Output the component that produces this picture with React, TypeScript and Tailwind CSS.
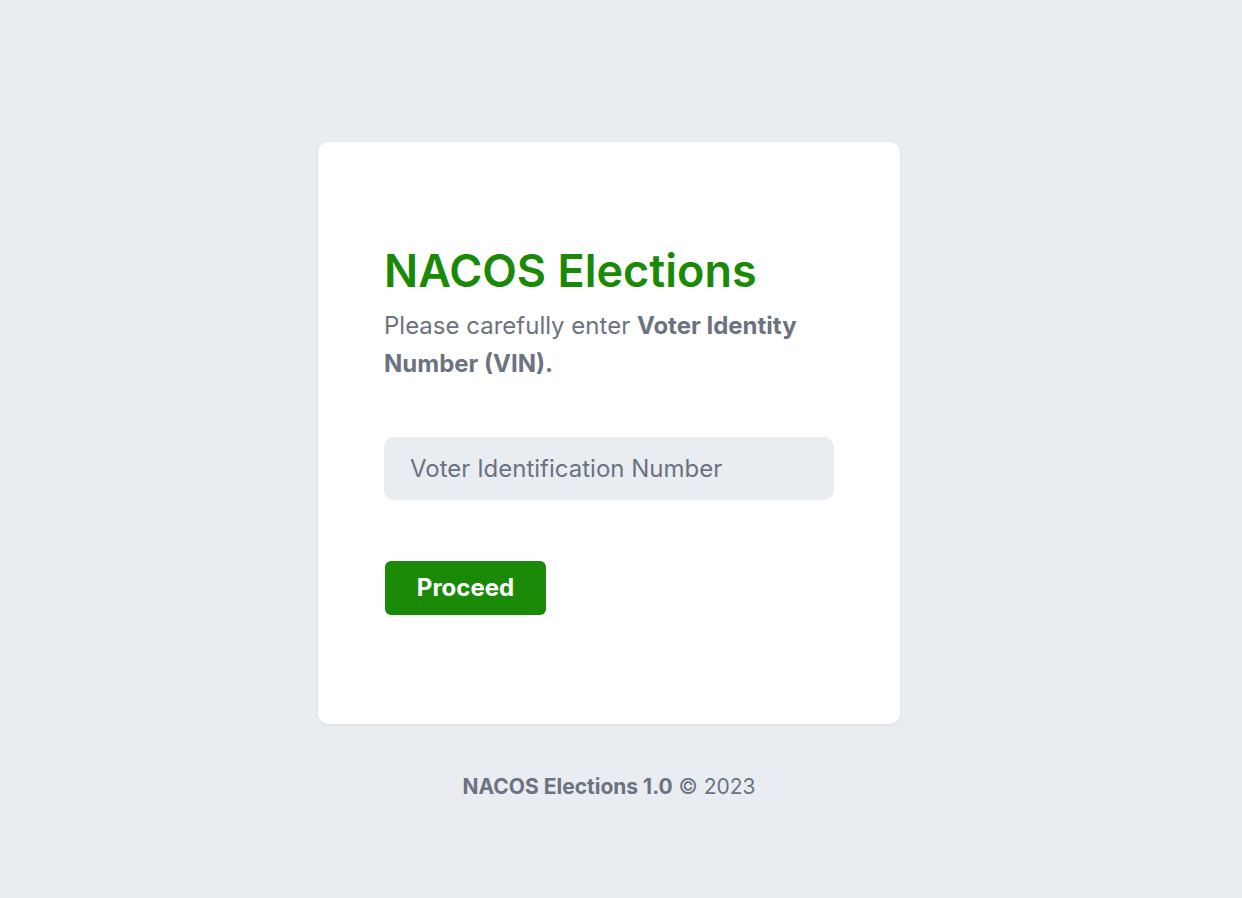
import { useState } from 'react'

export default function App() {
  const [vin, setVin] = useState('')

  return (
    <main className="flex min-h-screen flex-col items-center bg-[#e9edf2] pr-[24px] pt-[142px] font-['Inter',sans-serif]">
      <div className="w-[582px] h-[582px] rounded-[10px] bg-white px-[66px] pt-[106px] shadow-[0_1px_3px_rgba(0,0,0,0.08)]">
        <h1 className="text-[45px] font-semibold leading-none text-[#1a8a06]">NACOS Elections</h1>
        <p className="mt-[14px] text-[24px] leading-[38px] text-[#6b7280]">
          Please carefully enter <span className="font-bold">Voter Identity Number (VIN).</span>
        </p>

        <form onSubmit={(e) => e.preventDefault()} className="mt-[54px]">
          <input
            value={vin}
            onChange={(e) => setVin(e.target.value)}
            placeholder="Voter Identification Number"
            className="h-[63px] w-[450px] rounded-[10px] bg-[#e9edf2] px-[26px] text-[24px] text-[#374151] outline-none placeholder:text-[#6b7280]"
          />
          <button
            type="submit"
            className="mt-[61px] ml-px block h-[54px] w-[161px] rounded-[6px] bg-[#1a8a06] text-[24px] font-bold text-white"
          >
            Proceed
          </button>
        </form>
      </div>

      <p className="mt-[47px] text-[21px] text-[#6b7280]">
        <span className="font-bold">NACOS Elections 1.0</span> © 2023
      </p>
    </main>
  )
}
